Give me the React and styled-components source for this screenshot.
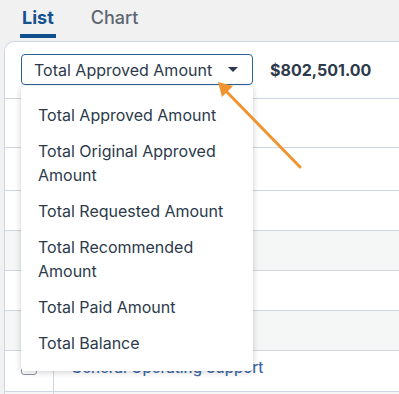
import React from "react";
import styled, { createGlobalStyle } from "styled-components";

const Global = createGlobalStyle`
  html, body { margin: 0; padding: 0; background: #f1f1f2; overflow: hidden; }
  body { font-family: Inter, "Noto Sans", sans-serif; color: #2c3a4b; }
`;

const Page = styled.div`
  position: relative;
  width: 399px;
  height: 394px;
  overflow: hidden;
`;

const Tabs = styled.div`
  display: flex;
  gap: 33px;
  padding-left: 20px;
`;

const Tab = styled.div`
  padding: 8px 2px 6px;
  font-size: 18px;
  line-height: 20px;
  font-weight: ${(p) => (p.$active ? 700 : 500)};
  color: ${(p) => (p.$active ? "#17528f" : "#5d6671")};
  border-bottom: 4px solid ${(p) => (p.$active ? "#0f4f8c" : "transparent")};
`;

const Card = styled.div`
  margin: 3px 0 0 4px;
  width: 420px;
  background: #fff;
  border: 1px solid #cdd6e2;
  border-right: none;
  border-radius: 10px 0 0 0;
`;

const Header = styled.div`
  display: flex;
  align-items: center;
  gap: 17px;
  padding: 12px 16px 13px;
`;

const SelectWrap = styled.div`
  position: relative;
`;

const SelectBox = styled.div`
  box-sizing: border-box;
  width: 232px;
  height: 31px;
  display: flex;
  align-items: center;
  justify-content: space-between;
  padding: 0 14px 0 12px;
  border: 1px solid #2d6299;
  border-radius: 4px;
  font-size: 16px;
  color: #2c3a4b;
`;

const Caret = styled.span`
  width: 0;
  height: 0;
  border-left: 5px solid transparent;
  border-right: 5px solid transparent;
  border-top: 5px solid #2c3a4b;
`;

const Amount = styled.div`
  font-size: 16px;
  font-weight: 700;
  color: #2c3a4b;
`;

const Menu = styled.ul`
  position: absolute;
  top: 32px;
  left: 0;
  z-index: 2;
  box-sizing: border-box;
  width: 232px;
  margin: 0;
  padding: 11px 17px 10px;
  list-style: none;
  background: #fff;
  border-radius: 4px;
  box-shadow: 0 1px 6px rgba(0, 0, 0, 0.2);
`;

const Item = styled.li`
  padding: 6px 0;
  font-size: 16px;
  line-height: 24px;
  color: #2c3a4b;
`;

const Row = styled.div`
  display: grid;
  grid-template-columns: 49px 1fr;
  height: ${(p) => p.$h}px;
  box-sizing: border-box;
  border-top: 1px solid #cdd6e2;
  background: ${(p) => (p.$stripe ? "#f5f6f6" : "#fff")};
`;

const CheckCell = styled.div`
  border-right: 1px solid #cdd6e2;
  display: flex;
  align-items: center;
  justify-content: center;
  padding-bottom: 9px;
`;

const Check = styled.span`
  width: 16px;
  height: 16px;
  box-sizing: border-box;
  border: 1px solid #8a94a0;
  border-radius: 3px;
  background: #fff;
`;

const NameCell = styled.div`
  display: flex;
  align-items: center;
  padding: 0 0 8px 17px;
  font-size: 15px;
  font-weight: 500;
  color: #3d69a6;
`;

const Arrow = styled.svg`
  position: absolute;
  left: 0;
  top: 0;
  z-index: 5;
  pointer-events: none;
`;

const options = [
  "Total Approved Amount",
  "Total Original Approved Amount",
  "Total Requested Amount",
  "Total Recommended Amount",
  "Total Paid Amount",
  "Total Balance",
];

const rows = [
  { h: 49, stripe: false },
  { h: 43, stripe: false },
  { h: 40, stripe: false },
  { h: 40, stripe: true },
  { h: 40, stripe: false },
  { h: 40, stripe: true },
  { h: 41, stripe: false, name: "General Operating Support" },
  { h: 40, stripe: true },
];

export default function App() {
  return (
    <Page>
      <Global />
      <Tabs>
        <Tab $active>List</Tab>
        <Tab>Chart</Tab>
      </Tabs>
      <Card>
        <Header>
          <SelectWrap>
            <SelectBox>
              <span>Total Approved Amount</span>
              <Caret />
            </SelectBox>
            <Menu>
              {options.map((o) => (
                <Item key={o}>{o}</Item>
              ))}
            </Menu>
          </SelectWrap>
          <Amount>$802,501.00</Amount>
        </Header>
        {rows.map((r, i) => (
          <Row key={i} $h={r.h} $stripe={r.stripe}>
            <CheckCell>{r.name && <Check />}</CheckCell>
            <NameCell>{r.name}</NameCell>
          </Row>
        ))}
      </Card>
      <Arrow width="399" height="394" viewBox="0 0 399 394">
        <line x1="300" y1="167" x2="224" y2="89" stroke="#ef9430" strokeWidth="3" strokeLinecap="round" />
        <polygon points="218,82 233,86 222,97" fill="#ef9430" />
      </Arrow>
    </Page>
  );
}
